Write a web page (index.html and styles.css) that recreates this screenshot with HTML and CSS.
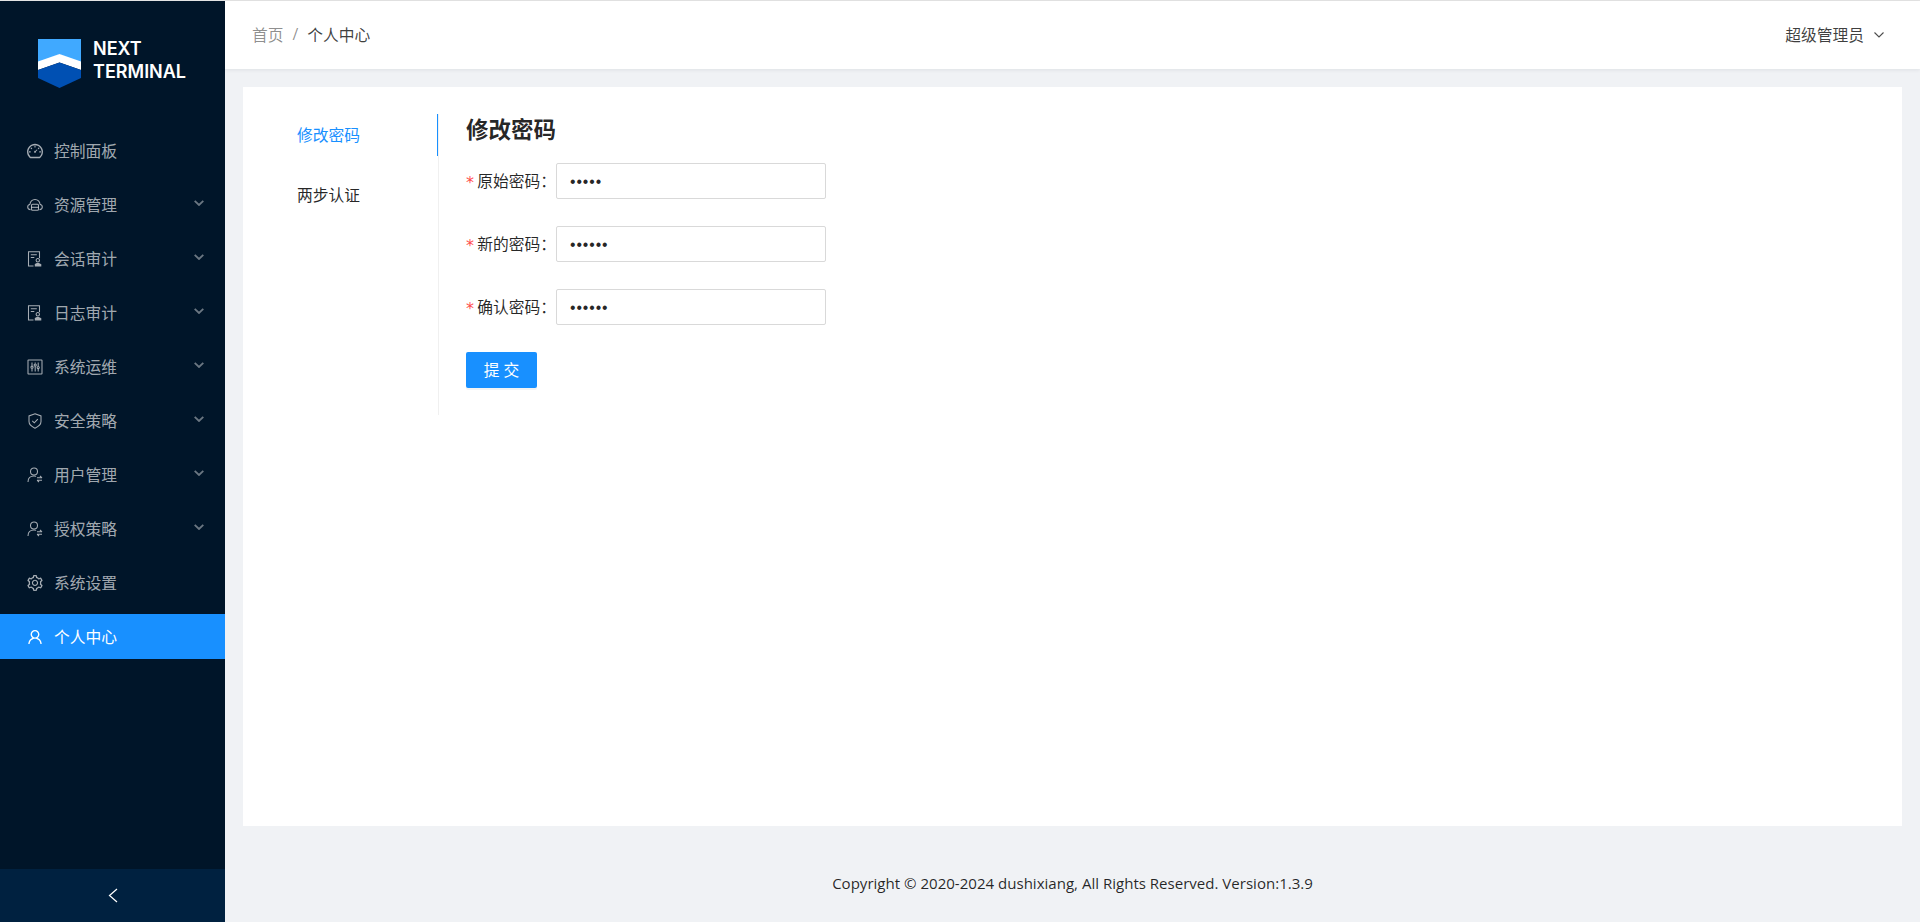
FILE: index.html
```html
<!DOCTYPE html>
<html lang="zh-CN">
<head>
<meta charset="utf-8">
<title>Next Terminal</title>
<link rel="stylesheet" href="styles.css">
</head>
<body>
<div class="app">
  <aside class="sider">
    <div class="logo">
      <svg class="logo-mark" viewBox="0 0 43 49" aria-hidden="true">
        <path fill="#40a9ff" d="M0 0h43v24L21.500 15.500 0 24z"/>
        <path fill="#fff" d="M0 22.500l21.500-7.500L43 22.500V31L21.500 23.500 0 31z"/>
        <path fill="#0050b3" d="M0 31l21.500-7.500L43 31v8L21.500 49 0 39z"/>
      </svg>
      <div class="logo-text">NEXT<br>TERMINAL</div>
    </div>
    <nav class="menu">
      <a class="menu-item">
        <svg class="icon" viewBox="64 64 896 896"><path fill="currentColor" d="M924.8 385.6a446.7 446.7 0 00-96-142.4 446.7 446.7 0 00-142.4-96C631.1 123.8 572.5 112 512 112s-119.1 11.8-174.4 35.2a446.7 446.7 0 00-142.4 96 446.7 446.7 0 00-96 142.4C75.8 440.9 64 499.5 64 560c0 132.7 58.3 257.7 159.9 343.1l1.7 1.4c5.8 4.8 13.1 7.5 20.6 7.5h531.7c7.5 0 14.8-2.7 20.6-7.5l1.7-1.4C901.7 817.7 960 692.7 960 560c0-60.5-11.9-119.1-35.2-174.4zM761.4 836H262.6A371.12 371.12 0 01140 560c0-99.4 38.7-192.8 109-263 70.3-70.3 163.7-109 263-109 99.4 0 192.8 38.7 263 109 70.3 70.3 109 163.7 109 263 0 105.6-44.5 205.5-122.6 276zM623.5 421.5a8.03 8.03 0 00-11.3 0L527.7 506c-18.7-5-39.4-.2-54.1 14.5a55.95 55.95 0 000 79.2 55.95 55.95 0 0079.2 0 55.87 55.87 0 0014.5-54.1l84.5-84.5c3.1-3.1 3.1-8.2 0-11.3l-28.3-28.3zM490 320h44c4.4 0 8-3.6 8-8v-80c0-4.4-3.6-8-8-8h-44c-4.4 0-8 3.6-8 8v80c0 4.4 3.6 8 8 8zm260 218v44c0 4.4 3.6 8 8 8h80c4.4 0 8-3.6 8-8v-44c0-4.4-3.6-8-8-8h-80c-4.4 0-8 3.6-8 8zm12.7-197.2l-31.1-31.1a8.03 8.03 0 00-11.3 0l-56.6 56.6a8.03 8.03 0 000 11.3l31.1 31.1c3.1 3.1 8.2 3.1 11.3 0l56.6-56.6c3.1-3.1 3.1-8.2 0-11.3zm-458.6-31.1a8.03 8.03 0 00-11.3 0l-31.1 31.1a8.03 8.03 0 000 11.3l56.6 56.6c3.1 3.1 8.2 3.1 11.3 0l31.1-31.1c3.1-3.1 3.1-8.2 0-11.3l-56.6-56.6zM262 530h-80c-4.4 0-8 3.6-8 8v44c0 4.4 3.6 8 8 8h80c4.4 0 8-3.6 8-8v-44c0-4.4-3.6-8-8-8z"/></svg>
        <span class="menu-label">控制面板</span>
      </a>
      <a class="menu-item">
        <svg class="icon stroke" viewBox="0 0 16 16"><path d="M3 7.500a5 5 0 0 1 10 0"/><path d="M3 7.500C1.500 7.700.7 8.800.7 10s1 2.600 2.800 2.600M13 7.500c1.500.2 2.300 1.300 2.300 2.500s-1 2.600-2.800 2.600"/><rect x="4.500" y="7.300" width="7" height="6" rx="1"/><path d="M4.500 10.300h7"/></svg>
        <span class="menu-label">资源管理</span>
        <svg class="chev" viewBox="0 0 10 6"><path d="M.7.8 5 5 9.300.8"/></svg>
      </a>
      <a class="menu-item">
        <svg class="icon" viewBox="0 0 16 16"><path class="doc" d="M12.500 7V.8H1.500v14.200h5"/><path class="doc" d="M3.800 3.800h6M3.800 6.400h3.500"/><circle class="doc" cx="10.800" cy="9.200" r="1.700"/><path fill="currentColor" d="M7.800 15.500v-2.600l2-.9h2l2 .9.500.4v2.200z"/></svg>
        <span class="menu-label">会话审计</span>
        <svg class="chev" viewBox="0 0 10 6"><path d="M.7.8 5 5 9.300.8"/></svg>
      </a>
      <a class="menu-item">
        <svg class="icon" viewBox="0 0 16 16"><path class="doc" d="M12.500 7V.8H1.500v14.200h5"/><path class="doc" d="M3.800 3.800h6M3.800 6.400h3.500"/><circle class="doc" cx="10.800" cy="9.200" r="1.700"/><path fill="currentColor" d="M7.800 15.500v-2.600l2-.9h2l2 .9.500.4v2.200z"/></svg>
        <span class="menu-label">日志审计</span>
        <svg class="chev" viewBox="0 0 10 6"><path d="M.7.8 5 5 9.300.8"/></svg>
      </a>
      <a class="menu-item">
        <svg class="icon stroke" viewBox="0 0 16 16"><rect x="1" y="1" width="14" height="14" rx=".5"/><path d="M5 3.500v3.300M5 9.600v3M8.200 3.500v1M8.200 7.500v5M11.200 3.500v3.600M11.200 9.900v2.700"/><circle cx="5" cy="8.200" r="1.100"/><circle cx="8.200" cy="6" r="1.100"/><circle cx="11.200" cy="8.500" r="1.100"/></svg>
        <span class="menu-label">系统运维</span>
        <svg class="chev" viewBox="0 0 10 6"><path d="M.7.8 5 5 9.300.8"/></svg>
      </a>
      <a class="menu-item">
        <svg class="icon stroke" viewBox="0 0 16 16"><path d="M8 .7l6 2.200v5.700c0 3-3 5.300-6 6.600-3-1.300-6-3.600-6-6.600V2.900z"/><path d="M5.300 7.800l2 2 3.500-3.700"/></svg>
        <span class="menu-label">安全策略</span>
        <svg class="chev" viewBox="0 0 10 6"><path d="M.7.8 5 5 9.300.8"/></svg>
      </a>
      <a class="menu-item">
        <svg class="icon stroke" viewBox="0 0 16 16"><circle cx="7" cy="4.400" r="3.500"/><path d="M1 15c0-3.500 2.300-6 6-6 .8 0 1.500.1 2.100.4"/><path d="M10 10.800h5M13 9l2 1.800M15 13.200h-5M12 15l-2-1.800"/></svg>
        <span class="menu-label">用户管理</span>
        <svg class="chev" viewBox="0 0 10 6"><path d="M.7.8 5 5 9.300.8"/></svg>
      </a>
      <a class="menu-item">
        <svg class="icon stroke" viewBox="0 0 16 16"><circle cx="7" cy="4.400" r="3.500"/><path d="M1 15c0-3.500 2.300-6 6-6 .8 0 1.500.1 2.100.4"/><path d="M10 10.800h5M13 9l2 1.800M15 13.200h-5M12 15l-2-1.800"/></svg>
        <span class="menu-label">授权策略</span>
        <svg class="chev" viewBox="0 0 10 6"><path d="M.7.8 5 5 9.300.8"/></svg>
      </a>
      <a class="menu-item">
        <svg class="icon" viewBox="64 64 896 896"><path fill="currentColor" d="M924.8 625.7l-65.5-56c3.1-19 4.7-38.4 4.7-57.8s-1.6-38.8-4.7-57.8l65.5-56a32.03 32.03 0 009.3-35.2l-.9-2.6a443.74 443.74 0 00-79.7-137.9l-1.8-2.1a32.12 32.12 0 00-35.1-9.5l-81.3 28.9c-30-24.6-63.5-44-99.7-57.6l-15.7-85a32.05 32.05 0 00-25.8-25.7l-2.7-.5c-52.1-9.4-106.9-9.4-159 0l-2.7.5a32.05 32.05 0 00-25.8 25.7l-15.8 85.4a351.86 351.86 0 00-99 57.4l-81.9-29.1a32 32 0 00-35.1 9.5l-1.8 2.1a446.02 446.02 0 00-79.7 137.9l-.9 2.6c-4.5 12.5-.8 26.5 9.3 35.2l66.3 56.6c-3.1 18.8-4.6 38-4.6 57.1 0 19.2 1.5 38.4 4.6 57.1L99 625.5a32.03 32.03 0 00-9.3 35.2l.9 2.6c18.1 50.4 44.9 96.9 79.7 137.9l1.8 2.1a32.12 32.12 0 0035.1 9.5l81.9-29.1c29.8 24.5 63.1 43.9 99 57.4l15.8 85.4a32.05 32.05 0 0025.8 25.7l2.7.5a449.4 449.4 0 00159 0l2.7-.5a32.05 32.05 0 0025.8-25.7l15.7-85a350 350 0 0099.7-57.6l81.3 28.9a32 32 0 0035.1-9.5l1.8-2.1c34.8-41.1 61.6-87.5 79.7-137.9l.9-2.6c4.5-12.3.8-26.3-9.3-35zM788.3 465.9c2.5 15.1 3.8 30.6 3.8 46.1s-1.3 31-3.8 46.1l-6.6 40.1 74.7 63.9a370.03 370.03 0 01-42.6 73.6L721 702.8l-31.4 25.8c-23.9 19.6-50.5 35-79.3 45.8l-38.1 14.3-17.9 97a377.5 377.5 0 01-85 0l-17.9-97.2-37.8-14.5c-28.5-10.8-55-26.2-78.7-45.7l-31.4-25.9-93.4 33.2c-17-22.9-31.2-47.6-42.6-73.6l75.5-64.5-6.5-40c-2.4-14.9-3.7-30.3-3.7-45.5 0-15.3 1.2-30.6 3.7-45.5l6.5-40-75.5-64.5c11.3-26.1 25.6-50.7 42.6-73.6l93.4 33.2 31.4-25.9c23.7-19.5 50.2-34.9 78.7-45.7l37.9-14.3 17.9-97.2c28.1-3.2 56.8-3.2 85 0l17.9 97 38.1 14.3c28.7 10.8 55.4 26.2 79.3 45.8l31.4 25.8 92.8-32.9c17 22.9 31.2 47.6 42.6 73.6L781.8 426l6.5 39.9zM512 326c-97.2 0-176 78.8-176 176s78.8 176 176 176 176-78.8 176-176-78.8-176-176-176zm79.2 255.2A111.6 111.6 0 01512 614c-29.9 0-58-11.7-79.2-32.8A111.6 111.6 0 01400 502c0-29.9 11.7-58 32.8-79.2C454 401.6 482.1 390 512 390c29.9 0 58 11.6 79.2 32.8A111.6 111.6 0 01624 502c0 29.9-11.7 58-32.8 79.2z"/></svg>
        <span class="menu-label">系统设置</span>
      </a>
      <a class="menu-item active">
        <svg class="icon" viewBox="64 64 896 896"><path fill="currentColor" d="M858.5 763.6a374 374 0 00-80.6-119.5 375.63 375.63 0 00-119.5-80.6c-.4-.2-.8-.3-1.2-.5C719.5 518 760 444.7 760 362c0-137-111-248-248-248S264 225 264 362c0 82.7 40.5 156 102.8 201.1-.4.2-.8.3-1.2.5-44.8 18.9-85 46-119.5 80.6a375.63 375.63 0 00-80.6 119.5A371.7 371.7 0 00136 901.8a8 8 0 008 8.2h60c4.4 0 7.9-3.5 8-7.8 2-77.2 33-149.5 87.8-204.3 56.7-56.7 132-87.9 212.2-87.9s155.5 31.2 212.2 87.9C779 752.7 810 825 812 902.2c.1 4.4 3.6 7.8 8 7.8h60a8 8 0 008-8.2c-1-47.8-10.9-94.3-29.5-138.2zM512 534c-45.9 0-89.1-17.9-121.6-50.4S340 407.9 340 362c0-45.9 17.9-89.1 50.4-121.6S466.1 190 512 190s89.1 17.9 121.6 50.4S684 316.1 684 362c0 45.9-17.9 89.1-50.4 121.6S557.9 534 512 534z"/></svg>
        <span class="menu-label">个人中心</span>
      </a>
    </nav>
    <div class="collapse-bar">
      <svg class="collapse-icon" viewBox="0 0 10 15"><path d="M9 1 1.500 7.500 9 14"/></svg>
    </div>
  </aside>
  <div class="main">
    <header class="topbar">
      <div class="crumbs">
        <span class="crumb-link">首页</span>
        <span class="crumb-sep">/</span>
        <span class="crumb-current">个人中心</span>
      </div>
      <div class="account">
        <span>超级管理员</span>
        <svg class="account-chev" viewBox="0 0 10 6"><path d="M.5.5 5 5 9.500.5"/></svg>
      </div>
    </header>
    <main class="card">
      <div class="panel">
        <ul class="tabs">
          <li class="tab selected">修改密码</li>
          <li class="tab">两步认证</li>
        </ul>
        <section class="pane">
          <h1 class="pane-title">修改密码</h1>
          <form class="form">
            <div class="row">
              <label class="row-label"><span class="req">*</span>原始密码：</label>
              <input class="field" type="password" value="admin">
            </div>
            <div class="row">
              <label class="row-label"><span class="req">*</span>新的密码：</label>
              <input class="field" type="password" value="123456">
            </div>
            <div class="row">
              <label class="row-label"><span class="req">*</span>确认密码：</label>
              <input class="field" type="password" value="123456">
            </div>
            <button class="submit" type="button">提 交</button>
          </form>
        </section>
      </div>
    </main>
    <footer class="footer">Copyright © 2020-2024 dushixiang, All Rights Reserved. Version:1.3.9</footer>
  </div>
</div>
</body>
</html>
```

FILE: styles.css
```css
* { box-sizing: border-box; }
html, body { margin: 0; height: 100%; overflow: hidden; }
body {
  font-family: "Open Sans", "Noto Sans CJK SC", sans-serif;
  font-size: 15.75px;
  color: rgba(0, 0, 0, .85);
  background: #e4e4e4;
}
.app { display: flex; height: 922px; padding-top: 1px; }

.sider {
  width: 225px;
  flex: none;
  background: #001529;
  display: flex;
  flex-direction: column;
}
.logo {
  height: 127px;
  padding: 38px 0 0 38px;
  display: flex;
  gap: 12px;
}
.logo-mark { width: 43px; height: 49px; flex: none; }
.logo-text {
  font-family: Inter, "Liberation Sans", sans-serif;
  font-size: 18px;
  font-weight: 600;
  line-height: 23px;
  color: #fff;
  margin-top: -2px;
}
.menu { flex: 1; display: flex; flex-direction: column; gap: 9px; }
.menu-item {
  height: 45px;
  padding: 0 21px 0 27px;
  display: flex;
  align-items: center;
  color: rgba(255, 255, 255, .65);
}
.menu-item.active { background: #1890ff; color: #fff; }
.icon { width: 16px; height: 16px; flex: none; margin-right: 11px; }
.icon.stroke, .doc { fill: none; stroke: currentColor; stroke-width: 1.05; }
.menu-label { flex: 1; }
.chev {
  width: 10px;
  height: 6px;
  margin-top: -3px;
  fill: none;
  stroke: rgba(255, 255, 255, .42);
  stroke-width: 1.8;
}
.collapse-bar {
  height: 53px;
  background: #002140;
  display: flex;
  align-items: center;
  justify-content: center;
}
.collapse-icon { width: 10px; height: 15px; fill: none; stroke: #fff; stroke-width: 1.2; }

.main { flex: 1; min-width: 0; display: flex; flex-direction: column; background: #f0f2f5; }
.topbar {
  height: 67.5px;
  flex: none;
  background: #fff;
  box-shadow: 0 1px 4px rgba(0, 21, 41, .08);
  padding: 0 36px 0 27px;
  display: flex;
  align-items: center;
  justify-content: space-between;
}
.crumbs { display: flex; gap: 9px; }
.crumb-link, .crumb-sep { color: rgba(0, 0, 0, .45); }
.crumb-current { color: rgba(0, 0, 0, .75); }
.account { display: flex; align-items: center; gap: 10px; color: rgba(0, 0, 0, .75); }
.account-chev { width: 10px; height: 6px; fill: none; stroke: rgba(0, 0, 0, .7); stroke-width: 1.1; }

.card {
  flex: 1;
  margin: 18px 18px 0;
  background: #fff;
  padding: 27px 0 0 27px;
}
.panel { display: flex; align-items: flex-start; }
.tabs {
  list-style: none;
  margin: 0;
  padding: 0;
  width: 169px;
  flex: none;
}
.tab {
  height: 42px;
  line-height: 42px;
  margin-bottom: 18.75px;
  padding-left: 27px;
}
.tab.selected { color: #1890ff; box-shadow: inset -2px 0 0 #1890ff; }
.pane { border-left: 1px solid #f0f0f0; padding: 0 0 27px 27px; margin-left: -1px; }
.pane-title { margin: 0 0 17.5px; font-size: 22.5px; line-height: 31.5px; font-weight: 700; }
.row { display: flex; align-items: center; margin-bottom: 27px; height: 36px; }
.row-label { width: 90px; flex: none; display: flex; align-items: center; white-space: nowrap; }
.req {
  color: #ff4d4f;
  width: 13.5px;
  font-family: "DejaVu Sans", sans-serif;
  font-size: 16px;
  margin-top: 3px;
}
.field {
  width: 270px;
  height: 36px;
  border: 1px solid #d9d9d9;
  border-radius: 2px;
  padding: 2px 13px 0;
  font-size: 15.75px;
  letter-spacing: .9px;
  font-family: "Liberation Sans", sans-serif;
  color: rgba(0, 0, 0, .85);
  background: #fff;
  outline: none;
}
.submit {
  display: block;
  width: 71px;
  height: 36px;
  border: 0;
  border-radius: 2px;
  background: #1890ff;
  color: #fff;
  font: inherit;
  box-shadow: 0 2px 0 rgba(0, 0, 0, .045);
}
.footer {
  height: 96px;
  flex: none;
  padding-top: 45px;
  line-height: 24px;
  text-align: center;
  color: rgba(0, 0, 0, .85);
  font-size: 15.05px;
}
```
